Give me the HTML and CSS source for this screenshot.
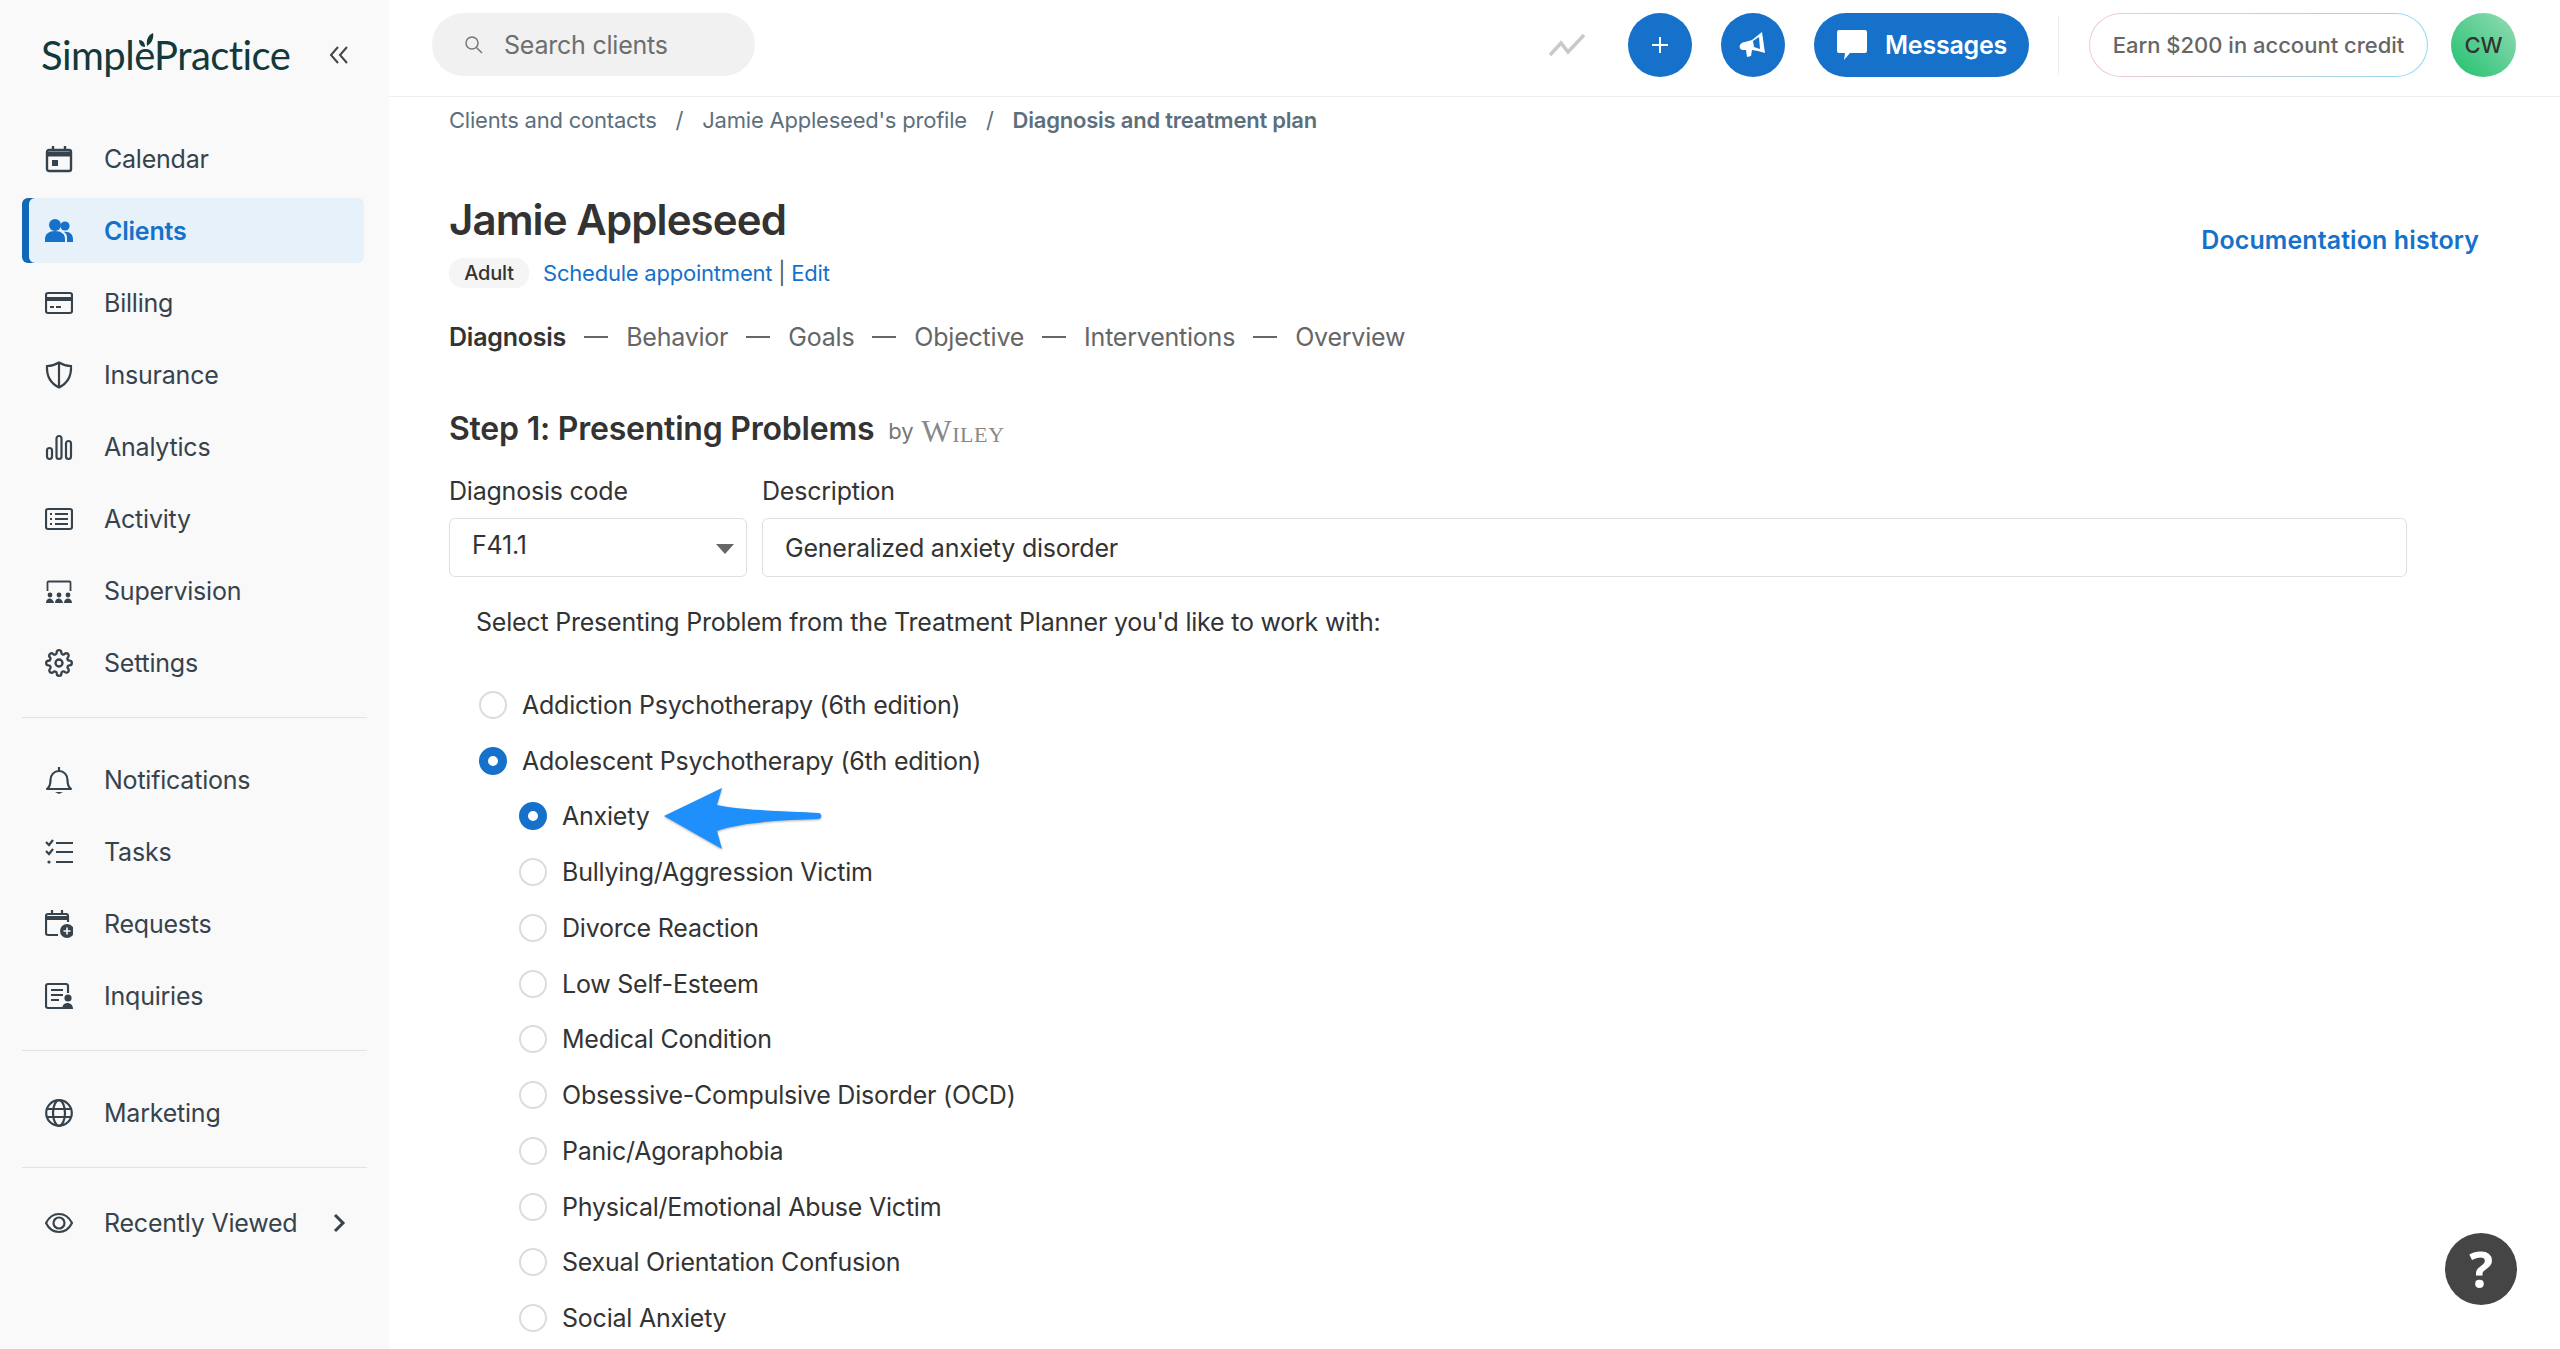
FILE: index.html
```html
<!DOCTYPE html>
<html lang="en">
<head>
  <meta charset="utf-8">
  <title>Diagnosis and treatment plan</title>
  <link rel="stylesheet" href="styles.css">
</head>
<body>
  <div class="sidebar">
    <div class="brand">
      <div class="logo">
        <span>SimplePractice</span>
        <svg class="leaf" viewBox="0 0 16 20"><path d="M9 14C8 8 10 3 15 1c1 5-1 10-6 13zM7 15C3 15 1 12 1 8c4 0 6 3 6 7z" fill="#123a3a"/></svg>
      </div>
      <svg class="collapse" viewBox="0 0 20 20" fill="none" stroke="#444" stroke-width="2"><path d="M9 2 2 10l7 8M18 2l-7 8 7 8"/></svg>
    </div>

    <a class="nav-item">
      <svg class="nav-icon" viewBox="0 0 28 28" fill="none" stroke="currentColor" stroke-width="2.4"><rect x="2" y="5" width="24" height="21" rx="2"/><path d="M2 9h24" stroke-width="5"/><path d="M8 1v4M20 1v4"/><rect x="7" y="15" width="6" height="6" fill="currentColor" stroke="none"/></svg>
      Calendar
    </a>
    <a class="nav-item active">
      <svg class="nav-icon" viewBox="0 0 28 28" fill="currentColor"><circle cx="10" cy="8" r="6"/><circle cx="20" cy="9" r="4.6"/><path d="M0 25v-3c0-5 4-8 10-8s10 3 10 8v3z"/><path d="M22 25v-4c0-3-1-5-3-6 5-1 9 2 9 7v3z"/></svg>
      Clients
    </a>
    <a class="nav-item">
      <svg class="nav-icon" viewBox="0 0 28 28" fill="none" stroke="currentColor" stroke-width="2.2"><rect x="1" y="4" width="26" height="20" rx="2"/><path d="M1 10h26" stroke-width="4"/><path d="M5 18h4M11 18h5" stroke-width="2"/></svg>
      Billing
    </a>
    <a class="nav-item">
      <svg class="nav-icon" viewBox="0 0 28 28" fill="none" stroke="currentColor" stroke-width="2.2"><path d="M14 1.500C10 4 6 5 2 5c-.5 9 3 17 12 21.500C23 22 26.500 14 26 5c-4 0-8-1-12-3.500zM14 2v24"/></svg>
      Insurance
    </a>
    <a class="nav-item">
      <svg class="nav-icon" viewBox="0 0 28 28" fill="none" stroke="currentColor" stroke-width="2.200"><rect x="2" y="15" width="5" height="11" rx="2.500"/><rect x="11.500" y="3" width="5" height="23" rx="2.500"/><rect x="21" y="8" width="5" height="18" rx="2.500"/></svg>
      Analytics
    </a>
    <a class="nav-item">
      <svg class="nav-icon" viewBox="0 0 28 28" fill="none" stroke="currentColor" stroke-width="2.200"><rect x="1" y="4" width="26" height="20" rx="2"/><path d="M10 9h13M10 14h13M10 19h13M5 9h2M5 14h2M5 19h2"/></svg>
      Activity
    </a>
    <a class="nav-item">
      <svg class="nav-icon" viewBox="0 0 28 28" fill="currentColor"><path d="M2.500 14V5.500a1 1 0 0 1 1-1h21a1 1 0 0 1 1 1V14" fill="none" stroke="currentColor" stroke-width="1.800"/><circle cx="5" cy="18" r="2.400"/><circle cx="14" cy="18" r="2.400"/><circle cx="23" cy="18" r="2.400"/><path d="M1 26c0-6 7-6 8 0zM10 26c0-6 7-6 8 0zM19 26c0-6 8-6 8 0z"/></svg>
      Supervision
    </a>
    <a class="nav-item">
      <svg class="nav-icon" viewBox="0 0 24 24" fill="none" stroke="currentColor" stroke-width="2"><circle cx="12" cy="12" r="3"/><path d="M19.400 15a1.650 1.650 0 0 0 .33 1.820l.06.06a2 2 0 1 1-2.830 2.830l-.06-.06a1.650 1.650 0 0 0-1.820-.33 1.650 1.650 0 0 0-1 1.510V21a2 2 0 1 1-4 0v-.09A1.650 1.650 0 0 0 9 19.400a1.650 1.650 0 0 0-1.820.33l-.06.06a2 2 0 1 1-2.830-2.830l.06-.06a1.650 1.650 0 0 0 .33-1.820 1.650 1.650 0 0 0-1.510-1H3a2 2 0 1 1 0-4h.09A1.650 1.650 0 0 0 4.600 9a1.650 1.650 0 0 0-.33-1.820l-.06-.06a2 2 0 1 1 2.830-2.830l.06.06a1.650 1.650 0 0 0 1.820.33H9a1.650 1.650 0 0 0 1-1.510V3a2 2 0 1 1 4 0v.09a1.650 1.650 0 0 0 1 1.510 1.650 1.650 0 0 0 1.820-.33l.06-.06a2 2 0 1 1 2.830 2.830l-.06.06a1.650 1.650 0 0 0-.33 1.820V9a1.650 1.650 0 0 0 1.510 1H21a2 2 0 1 1 0 4h-.09a1.650 1.650 0 0 0-1.510 1z"/></svg>
      Settings
    </a>

    <div class="divider"></div>

    <a class="nav-item">
      <svg class="nav-icon" viewBox="0 0 28 28" fill="none" stroke="currentColor" stroke-width="2.200"><path d="M2 23c3-2 3.500-5 3.500-9 0-5 3.500-9 8.500-9s8.500 4 8.500 9c0 4 .5 7 3.500 9z" stroke-linejoin="round"/><path d="M14 1v4"/><path d="M10 26h8l-4 2z" fill="currentColor" stroke="none"/></svg>
      Notifications
    </a>
    <a class="nav-item">
      <svg class="nav-icon" viewBox="0 0 28 28" fill="none" stroke="currentColor" stroke-width="2.200"><path d="M11 5h17M11 14h17M11 24h17" /><path d="M1 4l3 3 4-5M1 13l3 3 4-5"/><circle cx="4" cy="24" r="1.600" fill="currentColor" stroke="none"/></svg>
      Tasks
    </a>
    <a class="nav-item">
      <svg class="nav-icon" viewBox="0 0 28 28" fill="none" stroke="currentColor" stroke-width="2.200"><path d="M13 25H3a2 2 0 0 1-2-2V6a2 2 0 0 1 2-2h18a2 2 0 0 1 2 2v6"/><path d="M1 8h22" stroke-width="4"/><path d="M7 0v4M17 0v4"/><circle cx="22" cy="21" r="7" fill="currentColor" stroke="none"/><path d="M22 17.500v7M18.500 21h7" stroke="#f9f9f9" stroke-width="1.600"/></svg>
      Requests
    </a>
    <a class="nav-item">
      <svg class="nav-icon" viewBox="0 0 28 28" fill="none" stroke="currentColor" stroke-width="2.200"><path d="M23 11V4a2 2 0 0 0-2-2H3a2 2 0 0 0-2 2v20a2 2 0 0 0 2 2h14"/><path d="M6 8h12M6 13h12M6 18h8"/><circle cx="23" cy="16" r="3.600" fill="currentColor" stroke="none"/><path d="M17 27c0-8 11-8 11 0z" fill="currentColor" stroke="none"/></svg>
      Inquiries
    </a>

    <div class="divider"></div>

    <a class="nav-item">
      <svg class="nav-icon" viewBox="0 0 28 28" fill="none" stroke="currentColor" stroke-width="2.200"><circle cx="14" cy="14" r="12.800"/><ellipse cx="14" cy="14" rx="6" ry="12.800"/><path d="M2 10h24M2 18h24"/></svg>
      Marketing
    </a>

    <div class="divider divider-last"></div>

    <a class="nav-item">
      <svg class="nav-icon" viewBox="0 0 28 28" fill="none" stroke="currentColor" stroke-width="2.200"><path d="M1 14C4 8 9 5 14 5s10 3 13 9c-3 6-8 9-13 9S4 20 1 14z"/><circle cx="14" cy="14" r="5.500"/></svg>
      Recently Viewed
      <svg class="nav-arrow" viewBox="0 0 14 20" fill="none" stroke="currentColor" stroke-width="3"><path d="M3 2l8 8-8 8"/></svg>
    </a>
  </div>

  <div class="content">
    <div class="topbar">
      <div class="search">
        <svg class="search-icon" viewBox="0 0 20 20" fill="none" stroke="#777" stroke-width="1.500"><circle cx="8" cy="8" r="6"/><path d="M12.500 12.500 18 18"/></svg>
        Search clients
      </div>
      <div class="topbar-right">
        <svg class="trend" viewBox="0 0 37 24" fill="none" stroke="#c9c9c9" stroke-width="3.500"><path d="M1 22l11-12 7 9L35 2"/></svg>
        <div class="round-btn">
          <svg class="btn-icon" viewBox="0 0 20 20" fill="none" stroke="#fff" stroke-width="2"><path d="M10 2v16M2 10h16"/></svg>
        </div>
        <div class="round-btn">
          <svg class="btn-icon btn-icon-big" viewBox="0 0 28 28" fill="#fff"><path d="M23 1l3 21-7-2-6-1-1 6-4 1-1-7H4C1 19 0 16 1 14s3-3 5-3l7-2z"/><path d="M20 6l-6 4 1 6 6 2z" fill="#1571c9"/></svg>
        </div>
        <div class="messages-btn">
          <svg class="msg-icon" viewBox="0 0 30 30" fill="#fff"><path d="M2 0h26a2 2 0 0 1 2 2v19a2 2 0 0 1-2 2H13l-6 7 1-7H2a2 2 0 0 1-2-2V2a2 2 0 0 1 2-2z"/></svg>
          Messages
        </div>
        <div class="topbar-sep"></div>
        <div class="credit">
          <div class="credit-inner">Earn $200 in account credit</div>
        </div>
        <div class="avatar">CW</div>
      </div>
    </div>

    <div class="main">
      <div class="breadcrumb">
        <span>Clients and contacts</span>
        <span class="crumb-sep">/</span>
        <span>Jamie Appleseed's profile</span>
        <span class="crumb-sep">/</span>
        <span class="crumb-current">Diagnosis and treatment plan</span>
      </div>

      <div class="client-head">
        <h1 class="client-name">Jamie Appleseed</h1>
        <a class="doc-history">Documentation history</a>
      </div>
      <div class="client-meta">
        <span class="badge">Adult</span>
        <a class="link">Schedule appointment</a>
        <span class="pipe">|</span>
        <a class="link">Edit</a>
      </div>

      <div class="steps">
        <span class="step step-on">Diagnosis</span>
        <span class="step-dash"></span>
        <span class="step">Behavior</span>
        <span class="step-dash"></span>
        <span class="step">Goals</span>
        <span class="step-dash"></span>
        <span class="step">Objective</span>
        <span class="step-dash"></span>
        <span class="step">Interventions</span>
        <span class="step-dash"></span>
        <span class="step">Overview</span>
      </div>

      <div class="section-title">
        <h2>Step 1: Presenting Problems</h2>
        <span class="by">by</span>
        <span class="wiley">Wiley</span>
      </div>

      <div class="fields">
        <div class="field field-code">
          <label>Diagnosis code</label>
          <div class="select">F41.1<span class="caret"></span></div>
        </div>
        <div class="field field-desc">
          <label>Description</label>
          <div class="input">Generalized anxiety disorder</div>
        </div>
      </div>

      <p class="prompt">Select Presenting Problem from the Treatment Planner you'd like to work with:</p>

      <div class="radios">
        <div class="radio-row"><span class="radio"></span>Addiction Psychotherapy (6th edition)</div>
        <div class="radio-row"><span class="radio checked"></span>Adolescent Psychotherapy (6th edition)</div>
        <div class="radio-row sub"><span class="radio checked"></span>Anxiety</div>
        <div class="radio-row sub"><span class="radio"></span>Bullying/Aggression Victim</div>
        <div class="radio-row sub"><span class="radio"></span>Divorce Reaction</div>
        <div class="radio-row sub"><span class="radio"></span>Low Self-Esteem</div>
        <div class="radio-row sub"><span class="radio"></span>Medical Condition</div>
        <div class="radio-row sub"><span class="radio"></span>Obsessive-Compulsive Disorder (OCD)</div>
        <div class="radio-row sub"><span class="radio"></span>Panic/Agoraphobia</div>
        <div class="radio-row sub"><span class="radio"></span>Physical/Emotional Abuse Victim</div>
        <div class="radio-row sub"><span class="radio"></span>Sexual Orientation Confusion</div>
        <div class="radio-row sub"><span class="radio"></span>Social Anxiety</div>
      </div>
    </div>
  </div>

  <svg class="arrow" viewBox="0 0 164 64"><path d="M1 29 59 1 54 18C80 24 130 24 156 26c3 1 3 5 0 6C130 33 80 34 54 44l5 18z" fill="#1e8ffb"/></svg>
  <div class="help">?</div>
</body>
</html>
```

FILE: styles.css
```css
* {
  box-sizing: border-box;
}

body {
  margin: 0;
  height: 100vh;
  overflow: hidden;
  display: flex;
  font-family: Inter, "Liberation Sans", sans-serif;
  font-size: 25px;
  letter-spacing: -0.22px;
  color: #333;
  background-color: #fff;
}

/* sidebar */
.sidebar {
  width: 389px;
  flex-shrink: 0;
  padding: 0 22px;
  background-color: #f9f9f9;
}

.brand {
  height: 126px;
  display: flex;
  align-items: flex-start;
  padding: 27px 0 0 19px;
}

.logo {
  position: relative;
  width: 249px;
  flex-shrink: 0;
  font-family: Lato, sans-serif;
  font-size: 40px;
  line-height: 56px;
  letter-spacing: -0.55px;
  color: #123a3a;
}

.leaf {
  position: absolute;
  left: 97px;
  top: 5px;
  width: 16px;
  height: 20px;
}

.collapse {
  width: 20px;
  height: 20px;
  margin: 18px 0 0 39px;
}

.nav-item {
  height: 65px;
  margin: 0 3px 7px 0;
  padding-left: 23px;
  display: flex;
  align-items: center;
  gap: 32px;
  border-radius: 6px;
  color: #37434c;
}

.nav-item.active {
  background-color: #e7f1fa;
  box-shadow: inset 7px 0 0 #1268b8;
  color: #1571c9;
  font-weight: 600;
}

.nav-icon {
  width: 28px;
  height: 28px;
  flex-shrink: 0;
  margin-right: -1px;
}

.nav-arrow {
  width: 14px;
  height: 20px;
  margin-left: 3px;
}

.divider {
  width: 345px;
  height: 1px;
  margin: 22px 0 29px;
  background-color: #e2e2e2;
}

.divider-last {
  margin-bottom: 22px;
}

/* top bar */
.content {
  flex: 1;
  min-width: 0;
}

.topbar {
  height: 97px;
  padding: 13px 44px 0 43px;
  display: flex;
  justify-content: space-between;
  border-bottom: 1px solid #eee;
}

.search {
  width: 323px;
  height: 63px;
  padding-left: 32px;
  display: flex;
  align-items: center;
  gap: 20px;
  border-radius: 32px;
  background-color: #f1f1f1;
  color: #6e6e6e;
}

.search-icon {
  width: 20px;
  height: 20px;
}

.topbar-right {
  display: flex;
  align-items: center;
  height: 64px;
}

.trend {
  width: 37px;
  height: 24px;
  margin-right: 42px;
}

.round-btn {
  width: 64px;
  height: 64px;
  margin-right: 29px;
  display: flex;
  align-items: center;
  justify-content: center;
  border-radius: 50%;
  background-color: #1571c9;
}

.btn-icon {
  width: 20px;
  height: 20px;
}

.btn-icon-big {
  width: 28px;
  height: 28px;
}

.messages-btn {
  width: 215px;
  height: 64px;
  padding-left: 23px;
  display: flex;
  align-items: center;
  gap: 18px;
  border-radius: 32px;
  background-color: #1571c9;
  color: #fff;
  font-weight: 600;
}

.msg-icon {
  width: 30px;
  height: 30px;
}

.topbar-sep {
  width: 1px;
  height: 58px;
  margin: 0 30px 0 29px;
  background-color: #eee;
}

.credit {
  width: 339px;
  height: 64px;
  padding: 1px;
  border-radius: 32px;
  background: linear-gradient(90deg, #f6c9c9, #8fd9f2);
}

.credit-inner {
  height: 100%;
  display: flex;
  align-items: center;
  justify-content: center;
  border-radius: 31px;
  background-color: #fff;
  font-size: 22px;
  letter-spacing: 0;
  font-weight: 500;
  color: #666;
}

.avatar {
  width: 65px;
  height: 64px;
  margin-left: 23px;
  display: flex;
  align-items: center;
  justify-content: center;
  border-radius: 50%;
  background: linear-gradient(45deg, #1fc06e, #96dcb6);
  font-size: 22px;
  font-weight: 500;
}

/* main */
.main {
  padding: 8px 81px 0 60px;
}

.breadcrumb {
  display: flex;
  height: 30px;
  align-items: center;
  font-size: 22px;
  color: #5d6f7c;
}

.crumb-sep {
  margin: 0 19px;
}

.crumb-current {
  font-weight: 600;
}

.client-head {
  margin-top: 60px;
  height: 50px;
  display: flex;
  justify-content: space-between;
}

.client-name {
  margin: 0;
  font-size: 42px;
  line-height: 50px;
  letter-spacing: -0.9px;
  font-weight: 600;
}

.doc-history {
  margin-top: 30px;
  line-height: 30px;
  letter-spacing: 0.1px;
  font-weight: 600;
  color: #1571c9;
}

.client-meta {
  margin-top: 13px;
  height: 30px;
  display: flex;
  align-items: center;
  font-size: 22px;
  color: #1571c9;
}

.badge {
  width: 80px;
  height: 30px;
  margin-right: 14px;
  display: flex;
  align-items: center;
  justify-content: center;
  border-radius: 14px;
  background-color: #f5f5f5;
  font-weight: 500;
  font-size: 20px;
  color: #333;
}

.pipe {
  margin: 0 6px;
  color: #555;
}

.steps {
  margin-top: 34px;
  height: 30px;
  display: flex;
  align-items: center;
  gap: 18px;
  color: #666;
}

.step-on {
  font-weight: 600;
  color: #333;
}

.step-dash {
  width: 24px;
  height: 2px;
  background-color: #666;
}

.section-title {
  margin-top: 56px;
  height: 40px;
  display: flex;
  align-items: center;
}

.section-title h2 {
  margin: 0 14px 0 0;
  font-size: 32px;
  font-weight: 600;
}

.by {
  margin-top: 6px;
  font-size: 22px;
  color: #777;
}

.wiley {
  margin: 6px 0 0 8px;
  font-family: "Liberation Serif", serif;
  font-size: 32px;
  font-variant: small-caps;
  letter-spacing: 0.6px;
  color: #888;
}

.fields {
  margin-top: 28px;
  display: flex;
  gap: 15px;
}

.field label {
  display: block;
  height: 30px;
  line-height: 30px;
  margin-bottom: 12px;
}

.field-code {
  width: 298px;
}

.field-desc {
  width: 1645px;
}

.select,
.input {
  position: relative;
  height: 59px;
  display: flex;
  align-items: center;
  border: 1px solid #e0e0e0;
  border-radius: 6px;
}

.select {
  padding: 0 0 6px 22px;
}

.input {
  padding-left: 22px;
}

.caret {
  position: absolute;
  right: 12px;
  top: 25px;
  border-left: 9px solid transparent;
  border-right: 9px solid transparent;
  border-top: 10px solid #666;
}

.prompt {
  margin: 30px 0 40px;
  padding-left: 27px;
  line-height: 30px;
}

.radio-row {
  height: 55.75px;
  padding-left: 30px;
  display: flex;
  align-items: center;
  gap: 15px;
}

.radio-row.sub {
  padding-left: 70px;
}

.radio {
  width: 28px;
  height: 28px;
  flex-shrink: 0;
  border: 2px solid #dcdcdc;
  border-radius: 50%;
  background-color: #fff;
}

.radio.checked {
  border: 9px solid #1571c9;
}

/* over the page */
.arrow {
  position: absolute;
  left: 663px;
  top: 787px;
  width: 164px;
  height: 64px;
  filter: drop-shadow(0 1px 1px rgba(0, 0, 0, 0.3));
}

.help {
  position: absolute;
  left: 2445px;
  top: 1233px;
  width: 72px;
  height: 72px;
  display: flex;
  align-items: center;
  justify-content: center;
  border-radius: 50%;
  background-color: #454545;
  color: #fff;
  font-family: "Open Sans", sans-serif;
  font-size: 50px;
  font-weight: 700;
}
```
